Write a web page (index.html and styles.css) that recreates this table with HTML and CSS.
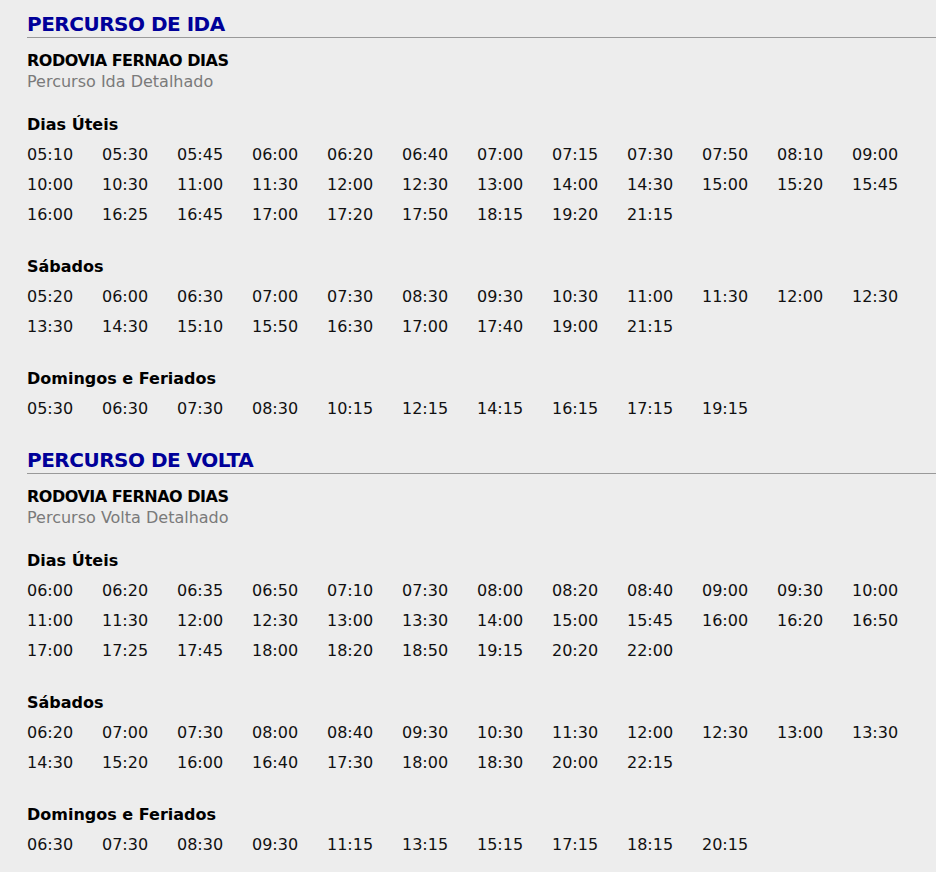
FILE: index.html
```html
<!DOCTYPE html>
<html lang="pt-BR">
<head>
<meta charset="utf-8">
<title>Horários</title>
<link rel="stylesheet" href="styles.css">
</head>
<body>
<main class="page">
  <section class="route">
    <h2 class="route-title">PERCURSO DE IDA</h2>
    <div class="route-name">RODOVIA FERNAO DIAS</div>
    <div class="route-sub">Percurso Ida Detalhado</div>

    <div class="day">
      <h3 class="day-title">Dias Úteis</h3>
      <div class="times">
        <span>05:10</span><span>05:30</span><span>05:45</span><span>06:00</span><span>06:20</span><span>06:40</span><span>07:00</span><span>07:15</span><span>07:30</span><span>07:50</span><span>08:10</span><span>09:00</span>
        <span>10:00</span><span>10:30</span><span>11:00</span><span>11:30</span><span>12:00</span><span>12:30</span><span>13:00</span><span>14:00</span><span>14:30</span><span>15:00</span><span>15:20</span><span>15:45</span>
        <span>16:00</span><span>16:25</span><span>16:45</span><span>17:00</span><span>17:20</span><span>17:50</span><span>18:15</span><span>19:20</span><span>21:15</span>
      </div>
    </div>

    <div class="day">
      <h3 class="day-title">Sábados</h3>
      <div class="times">
        <span>05:20</span><span>06:00</span><span>06:30</span><span>07:00</span><span>07:30</span><span>08:30</span><span>09:30</span><span>10:30</span><span>11:00</span><span>11:30</span><span>12:00</span><span>12:30</span>
        <span>13:30</span><span>14:30</span><span>15:10</span><span>15:50</span><span>16:30</span><span>17:00</span><span>17:40</span><span>19:00</span><span>21:15</span>
      </div>
    </div>

    <div class="day">
      <h3 class="day-title">Domingos e Feriados</h3>
      <div class="times">
        <span>05:30</span><span>06:30</span><span>07:30</span><span>08:30</span><span>10:15</span><span>12:15</span><span>14:15</span><span>16:15</span><span>17:15</span><span>19:15</span>
      </div>
    </div>
  </section>

  <section class="route">
    <h2 class="route-title">PERCURSO DE VOLTA</h2>
    <div class="route-name">RODOVIA FERNAO DIAS</div>
    <div class="route-sub">Percurso Volta Detalhado</div>

    <div class="day">
      <h3 class="day-title">Dias Úteis</h3>
      <div class="times">
        <span>06:00</span><span>06:20</span><span>06:35</span><span>06:50</span><span>07:10</span><span>07:30</span><span>08:00</span><span>08:20</span><span>08:40</span><span>09:00</span><span>09:30</span><span>10:00</span>
        <span>11:00</span><span>11:30</span><span>12:00</span><span>12:30</span><span>13:00</span><span>13:30</span><span>14:00</span><span>15:00</span><span>15:45</span><span>16:00</span><span>16:20</span><span>16:50</span>
        <span>17:00</span><span>17:25</span><span>17:45</span><span>18:00</span><span>18:20</span><span>18:50</span><span>19:15</span><span>20:20</span><span>22:00</span>
      </div>
    </div>

    <div class="day">
      <h3 class="day-title">Sábados</h3>
      <div class="times">
        <span>06:20</span><span>07:00</span><span>07:30</span><span>08:00</span><span>08:40</span><span>09:30</span><span>10:30</span><span>11:30</span><span>12:00</span><span>12:30</span><span>13:00</span><span>13:30</span>
        <span>14:30</span><span>15:20</span><span>16:00</span><span>16:40</span><span>17:30</span><span>18:00</span><span>18:30</span><span>20:00</span><span>22:15</span>
      </div>
    </div>

    <div class="day">
      <h3 class="day-title">Domingos e Feriados</h3>
      <div class="times">
        <span>06:30</span><span>07:30</span><span>08:30</span><span>09:30</span><span>11:15</span><span>13:15</span><span>15:15</span><span>17:15</span><span>18:15</span><span>20:15</span>
      </div>
    </div>
  </section>
</main>
</body>
</html>
```
FILE: styles.css
```css
html, body {
  margin: 0;
  padding: 0;
  background: #ededed;
}

body {
  font-family: "DejaVu Sans", Verdana, sans-serif;
  color: #000;
  font-size: 16px;
}

.page {
  padding-left: 27px;
}

.route-title {
  margin: 11px 0 0 0;
  font-size: 20px;
  line-height: 26px;
  font-weight: bold;
  letter-spacing: -0.5px;
  color: #000099;
  border-bottom: 1px solid #999;
}

.route + .route .route-title {
  margin-top: 23px;
}

.route-name {
  margin-top: 12px;
  font-weight: bold;
  font-size: 16px;
  line-height: 21px;
  letter-spacing: -0.5px;
}

.route-sub {
  font-size: 16px;
  line-height: 21px;
  color: #7a7a7a;
}

.day {
  margin-top: 23px;
}

.day + .day {
  margin-top: 27px;
}

.day-title {
  margin: 0;
  font-size: 16px;
  line-height: 20px;
  font-weight: bold;
}

.times {
  margin-top: 5px;
  display: grid;
  grid-template-columns: repeat(12, 75px);
  grid-auto-rows: 30px;
  align-items: center;
}

.times span {
  line-height: 30px;
  color: #111;
}
```
